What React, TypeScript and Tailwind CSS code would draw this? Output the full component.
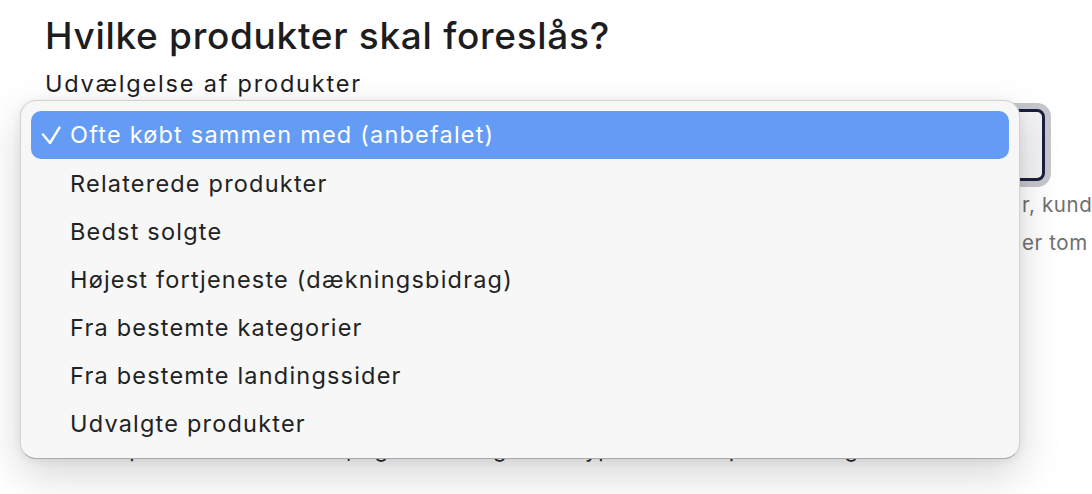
import { useState } from 'react';

const options = [
  'Ofte købt sammen med (anbefalet)',
  'Relaterede produkter',
  'Bedst solgte',
  'Højest fortjeneste (dækningsbidrag)',
  'Fra bestemte kategorier',
  'Fra bestemte landingssider',
  'Udvalgte produkter',
];

export default function App() {
  const [selected] = useState(0);

  return (
    <div className="relative h-[494px] w-[1092px] overflow-hidden bg-white font-['Inter','Noto_Sans',sans-serif] text-[#1d1d1f]">
      {/* Page content behind the open select */}
      <div className="pl-[45px] pt-[14px]">
        <h1 className="text-[37px] font-medium leading-[44px] tracking-[0.7px]">
          Hvilke produkter skal foreslås?
        </h1>
        <p className="mt-[12px] text-[23.5px] leading-[28px] tracking-[1.8px]">Udvælgelse af produkter</p>

        <div className="mt-[11px] h-[72px] w-[1000px] rounded-[8px] border-[3px] border-[#1b1f3f] bg-[#f3f3f5] shadow-[0_0_0_6px_#c6c7cd]" />

        <div className="mt-[5px] whitespace-nowrap text-[20.5px] leading-[38px] tracking-[0.6px] text-[#707070]">
          <div className="flex">
            <span className="w-[977px] shrink-0 overflow-hidden">
              Vælg hvordan produkterne udvælges ud fra kategorier
            </span>
            <span>r, kunder og ordrer</span>
          </div>
          <div className="flex">
            <span className="w-[977px] shrink-0 overflow-hidden">
              Listen skjules automatisk, hvis den
            </span>
            <span>er tom</span>
          </div>
        </div>

        <p className="mt-[172px] whitespace-nowrap pl-[20px] text-[22px] leading-[30px] tracking-[0.8px] text-[#2a2a2a]">
          Antal produkter der vises, og rækkefølgen de typisk vises i på siden og i kurven
        </p>
      </div>

      {/* Open native-style dropdown menu */}
      <div className="absolute left-[20px] top-[100px] w-[1000px] rounded-[16px] border border-[#d2d2d5] border-b-[#a9a9ad] bg-[#f7f7f7] px-[10px] py-[10px] shadow-[0_16px_44px_rgba(0,0,0,0.16),0_2px_10px_rgba(0,0,0,0.07)]">
        {options.map((opt, i) => (
          <div
            key={opt}
            className={`flex h-[48px] items-center rounded-[10px] pl-[39px] text-[23.5px] tracking-[1.2px] ${
              i === selected ? 'relative mb-[1px] h-[47px] bg-[#649bf4] text-white' : 'text-[#222222]'
            }`}
          >
            {i === selected && (
              <svg
                className="absolute left-[10px] top-[15px]"
                width="20"
                height="18"
                viewBox="0 0 20 18"
                fill="none"
                stroke="white"
                strokeWidth="2.4"
                strokeLinecap="round"
                strokeLinejoin="round"
              >
                <polyline points="2,8.5 9,17 18.5,1.5" />
              </svg>
            )}
            {opt}
          </div>
        ))}
      </div>
    </div>
  );
}
